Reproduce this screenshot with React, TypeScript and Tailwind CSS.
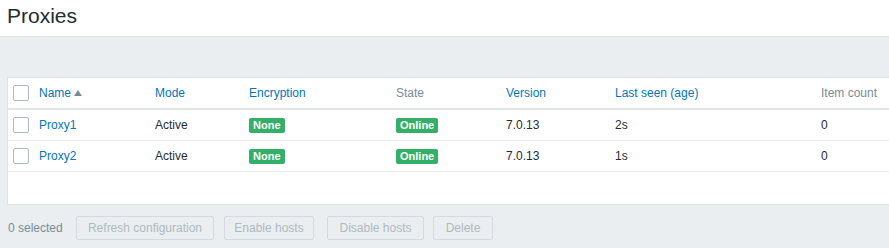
import React from "react";

const font = { fontFamily: '"Liberation Sans", Arial, sans-serif' };

function Check() {
  return <span className="block w-4 h-4 border border-[#acbbc2] rounded-[2px] bg-white" />;
}

function Badge({ children }: { children: React.ReactNode }) {
  return (
    <span className="inline-block bg-[#34af67] text-white font-bold text-[11px] leading-[15px] px-[4px] rounded-[2px]">
      {children}
    </span>
  );
}

const rows = [
  { name: "Proxy1", seen: "2s" },
  { name: "Proxy2", seen: "1s" },
];

export default function App() {
  return (
    <div style={font} className="w-[889px] h-[248px] overflow-hidden bg-[#ebeef0] text-[12px] text-[#1f2c33]">
      <div className="h-[37px] bg-white border-b border-[#dfe4e7] pl-[7px] pt-[4px]">
        <h1 className="text-[21px] leading-[24px] text-[#1f2c33] font-normal">Proxies</h1>
      </div>
      <div className="pt-[40px] pl-[7px]">
        <div className="w-[1000px] bg-white border border-[#dfe4e7] pb-[32px]">
          <table className="border-collapse table-fixed w-[998px]">
            <colgroup>
              <col className="w-[26px]" />
              <col className="w-[116px]" />
              <col className="w-[94px]" />
              <col className="w-[147px]" />
              <col className="w-[110px]" />
              <col className="w-[109px]" />
              <col className="w-[206px]" />
              <col />
            </colgroup>
            <thead>
              <tr className="h-[31px] border-b-2 border-[#dfe4e7] text-left">
                <th className="pl-[5px] font-normal align-middle"><Check /></th>
                <th className="pl-[5px] font-normal text-[#0275b8] whitespace-nowrap">
                  Name
                  <svg className="inline-block ml-[3px] mb-[1px]" width="8" height="6" viewBox="0 0 8 6">
                    <path d="M0 6 L4 0 L8 6 Z" fill="#768d99" />
                  </svg>
                </th>
                <th className="pl-[5px] font-normal text-[#0275b8]">Mode</th>
                <th className="pl-[5px] font-normal text-[#0275b8]">Encryption</th>
                <th className="pl-[5px] font-normal text-[#768d99]">State</th>
                <th className="pl-[5px] font-normal text-[#0275b8]">Version</th>
                <th className="pl-[5px] font-normal text-[#0275b8]">Last seen (age)</th>
                <th className="pl-[5px] font-normal text-[#768d99]">Item count</th>
              </tr>
            </thead>
            <tbody>
              {rows.map((r) => (
                <tr key={r.name} className="h-[31px] border-b border-[#e6eaed]">
                  <td className="pl-[5px] align-middle"><Check /></td>
                  <td className="pl-[5px] text-[#0275b8]">{r.name}</td>
                  <td className="pl-[5px]">Active</td>
                  <td className="pl-[5px]"><Badge>None</Badge></td>
                  <td className="pl-[5px]"><Badge>Online</Badge></td>
                  <td className="pl-[5px]">7.0.13</td>
                  <td className="pl-[5px]">{r.seen}</td>
                  <td className="pl-[5px]">0</td>
                </tr>
              ))}
            </tbody>
          </table>
        </div>
      </div>
      <div className="flex items-center pl-[8px] pt-[11px]">
        <span className="text-[#768d99] w-[68px]">0 selected</span>
        <span className="h-[24px] w-[138px] mr-[10px] flex items-center justify-center border border-[#d4dbe0] rounded-[2px] bg-[#ebeef0] text-[#acbbc2]">Refresh configuration</span>
        <span className="h-[24px] w-[90px] mr-[13px] flex items-center justify-center border border-[#d4dbe0] rounded-[2px] bg-[#ebeef0] text-[#acbbc2]">Enable hosts</span>
        <span className="h-[24px] w-[97px] mr-[9px] flex items-center justify-center border border-[#d4dbe0] rounded-[2px] bg-[#ebeef0] text-[#acbbc2]">Disable hosts</span>
        <span className="h-[24px] w-[60px] flex items-center justify-center border border-[#d4dbe0] rounded-[2px] bg-[#ebeef0] text-[#acbbc2]">Delete</span>
      </div>
    </div>
  );
}
